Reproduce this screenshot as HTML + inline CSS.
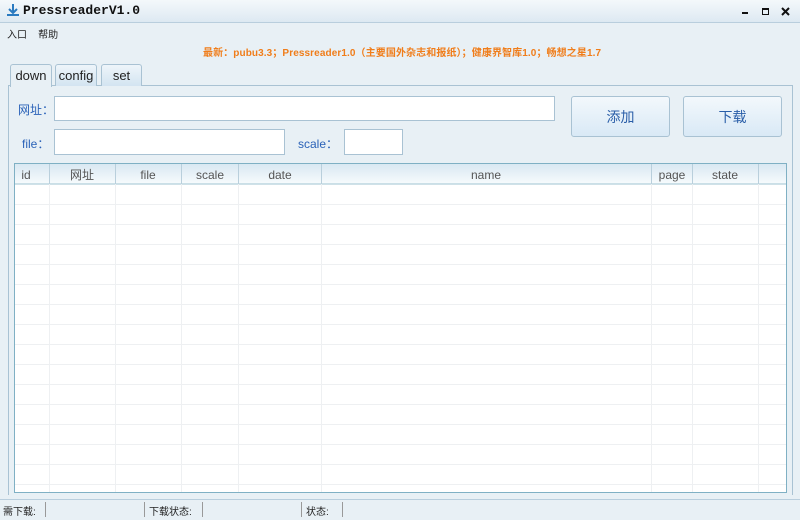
<!DOCTYPE html><html><head><meta charset="utf-8"><style>
*{margin:0;padding:0;box-sizing:border-box}
body{width:800px;height:520px;overflow:hidden;background:#e8f0f5;font-family:"Liberation Sans","Noto Sans CJK SC",sans-serif;position:relative;font-size:12px;color:#333}
.a{position:absolute}
.inp{position:absolute;background:#fff;border:1px solid #a9c2d3}
.btn{position:absolute;border:1px solid #a9c2d3;border-radius:3px;background:linear-gradient(#f3f8fc,#d9e9f6);color:#2a5ea8;font-size:14px;text-align:center;line-height:40px}
.lbl{position:absolute;color:#2a62b8;font-size:12px}
.tab{position:absolute;top:64px;height:22px;border:1px solid #a9c2d3;border-bottom:none;border-radius:3px 3px 0 0;background:linear-gradient(#eef5fa,#d3e4f1);font-size:13px;text-align:center;line-height:21px;color:#222}
</style></head><body>
<div class="a" style="left:0;top:0;width:800px;height:23px;background:linear-gradient(#f4f8fb,#dde9f2);border-bottom:1px solid #b9cedd"></div>
<svg class="a" style="left:6px;top:3px" width="14" height="14"><path d="M7 1v8M3 6l4 4 4-4M1 12h12" stroke="#2a7ac0" stroke-width="2" fill="none"/></svg>
<div class="a" style="left:23px;top:3px;font-family:'Liberation Mono',monospace;font-weight:bold;font-size:13px;color:#111">PressreaderV1.0</div>
<svg class="a" style="left:740px;top:6px" width="55" height="12"><rect x="2" y="6" width="6" height="2" fill="#111"/><rect x="763" y="0" width="0" height="0"/><rect x="22.5" y="2.5" width="6" height="6" fill="none" stroke="#111"/><rect x="22" y="2" width="7" height="2" fill="#111"/><path d="M42 2l7 7M49 2l-7 7" stroke="#111" stroke-width="2"/></svg>
<div class="a" style="left:7px;top:26px;font-size:10px;color:#222">入口&nbsp;&nbsp;&nbsp;&nbsp;帮助</div>
<div class="a" style="left:203px;top:44px;font-size:10px;font-weight:bold;color:#f07d1a;letter-spacing:0.1px">最新：pubu3.3；Pressreader1.0（主要国外杂志和报纸）；健康界智库1.0；畅想之星1.7</div>
<div class="a" style="left:8px;top:85px;width:785px;height:410px;border:1px solid #a9c2d3;border-bottom:none;background:#e8f0f5"></div>
<div class="tab" style="left:10px;width:42px;height:23px;background:#e8f0f5">down</div>
<div class="tab" style="left:55px;width:42px">config</div>
<div class="tab" style="left:101px;width:41px">set</div>
<div class="lbl" style="left:18px;top:101px">网址：</div>
<div class="inp" style="left:54px;top:96px;width:501px;height:25px"></div>
<div class="lbl" style="left:22px;top:135px">file：</div>
<div class="inp" style="left:54px;top:129px;width:231px;height:26px"></div>
<div class="lbl" style="left:298px;top:135px">scale：</div>
<div class="inp" style="left:344px;top:129px;width:59px;height:26px"></div>
<div class="btn" style="left:571px;top:96px;width:99px;height:41px">添加</div>
<div class="btn" style="left:683px;top:96px;width:99px;height:41px">下载</div>
<svg class="a" style="left:14px;top:163px" width="773" height="330">
<rect x="0.5" y="0.5" width="772" height="329" fill="#fff" stroke="#7fb0c4"/>
<defs><linearGradient id="g" x1="0" y1="0" x2="0" y2="1"><stop offset="0" stop-color="#d9e8f2"/><stop offset="1" stop-color="#f7fbfd"/></linearGradient></defs>
<rect x="1" y="1" width="771" height="20" fill="url(#g)"/>
<line x1="1" y1="21" x2="772" y2="21" stroke="#9fc3d2"/>
<g stroke="#eef0f2"><line x1="1" y1="41.5" x2="772" y2="41.5"/><line x1="1" y1="61.5" x2="772" y2="61.5"/><line x1="1" y1="81.5" x2="772" y2="81.5"/><line x1="1" y1="101.5" x2="772" y2="101.5"/><line x1="1" y1="121.5" x2="772" y2="121.5"/><line x1="1" y1="141.5" x2="772" y2="141.5"/><line x1="1" y1="161.5" x2="772" y2="161.5"/><line x1="1" y1="181.5" x2="772" y2="181.5"/><line x1="1" y1="201.5" x2="772" y2="201.5"/><line x1="1" y1="221.5" x2="772" y2="221.5"/><line x1="1" y1="241.5" x2="772" y2="241.5"/><line x1="1" y1="261.5" x2="772" y2="261.5"/><line x1="1" y1="281.5" x2="772" y2="281.5"/><line x1="1" y1="301.5" x2="772" y2="301.5"/><line x1="1" y1="321.5" x2="772" y2="321.5"/>
<line x1="35.5" y1="21" x2="35.5" y2="329"/><line x1="101.5" y1="21" x2="101.5" y2="329"/><line x1="167.5" y1="21" x2="167.5" y2="329"/><line x1="224.5" y1="21" x2="224.5" y2="329"/><line x1="307.5" y1="21" x2="307.5" y2="329"/><line x1="637.5" y1="21" x2="637.5" y2="329"/><line x1="678.5" y1="21" x2="678.5" y2="329"/><line x1="744.5" y1="21" x2="744.5" y2="329"/></g>
<g stroke="#b9cfdc"><line x1="35.5" y1="1" x2="35.5" y2="21"/><line x1="101.5" y1="1" x2="101.5" y2="21"/><line x1="167.5" y1="1" x2="167.5" y2="21"/><line x1="224.5" y1="1" x2="224.5" y2="21"/><line x1="307.5" y1="1" x2="307.5" y2="21"/><line x1="637.5" y1="1" x2="637.5" y2="21"/><line x1="678.5" y1="1" x2="678.5" y2="21"/><line x1="744.5" y1="1" x2="744.5" y2="21"/></g>
<g font-family="Liberation Sans,Noto Sans CJK SC,sans-serif" font-size="12" fill="#555" text-anchor="middle"><text x="12" y="16">id</text><text x="68" y="16">网址</text><text x="134" y="16">file</text><text x="196" y="16">scale</text><text x="266" y="16">date</text><text x="472" y="16">name</text><text x="658" y="16">page</text><text x="711" y="16">state</text></g>
</svg>
<div class="a" style="left:0;top:499px;width:800px;height:21px;background:#e8f0f5;border-top:1px solid #b9cedd"></div>
<div class="a" style="left:3px;top:503px;font-size:10px;color:#222">需下载:</div>
<div class="a" style="left:45px;top:502px;width:1px;height:15px;background:#999"></div>
<div class="a" style="left:144px;top:502px;width:1px;height:15px;background:#999"></div>
<div class="a" style="left:149px;top:503px;font-size:10px;color:#222">下载状态:</div>
<div class="a" style="left:202px;top:502px;width:1px;height:15px;background:#999"></div>
<div class="a" style="left:301px;top:502px;width:1px;height:15px;background:#999"></div>
<div class="a" style="left:306px;top:503px;font-size:10px;color:#222">状态:</div>
<div class="a" style="left:342px;top:502px;width:1px;height:15px;background:#999"></div>
</body></html>
